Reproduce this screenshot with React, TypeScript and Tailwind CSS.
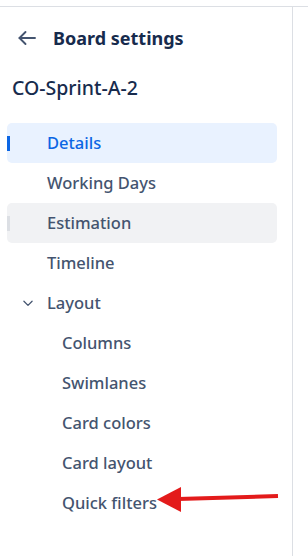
import React from "react";

const items = [
  { label: "Details", state: "active" },
  { label: "Working Days" },
  { label: "Estimation", state: "hover" },
  { label: "Timeline" },
];
const sub = ["Columns", "Swimlanes", "Card colors", "Card layout", "Quick filters"];

export default function App() {
  return (
    <div
      className="relative w-[308px] h-[556px] bg-white overflow-hidden"
      style={{ fontFamily: '"Noto Sans", "Open Sans", sans-serif' }}
    >
      <div className="mt-[6px] border-t border-[#dcdfe4] h-[550px] flex">
        <div className="w-[293px] border-r border-[#dcdfe4] h-full flex flex-col">
          <div className="flex items-center h-[50px] mt-[6px] pl-[15px]">
            <svg width="24" height="24" viewBox="0 0 24 24" fill="none" stroke="#44546f" strokeWidth="1.9" strokeLinecap="round" strokeLinejoin="round">
              <path d="M20 12H4.5" />
              <path d="M10.5 6l-6 6 6 6" />
            </svg>
            <span className="ml-[14px] text-[18px] font-bold text-[#172b4d]">Board settings</span>
          </div>
          <div className="pl-[12px] h-[50px] flex items-center text-[19.5px] font-medium text-[#172b4d]">CO-Sprint-A-2</div>
          <div className="mt-[10px] flex flex-col">
            {items.map((it) => (
              <div
                key={it.label}
                className={
                  "relative ml-[7px] w-[270px] h-[40px] rounded-[5px] flex items-center pl-[40px] text-[16.5px] font-medium " +
                  (it.state === "active"
                    ? "bg-[#e9f2ff] text-[#0c66e4]"
                    : it.state === "hover"
                    ? "bg-[#f1f2f4] text-[#44546f]"
                    : "text-[#44546f]")
                }
              >
                {it.state === "active" && (
                  <span className="absolute left-0 top-[13px] w-[3px] h-[15px] bg-[#0c66e4]" />
                )}
                {it.state === "hover" && (
                  <span className="absolute left-0 top-[13px] w-[3px] h-[15px] bg-[#dcdfe4]" />
                )}
                {it.label}
              </div>
            ))}
            <div className="ml-[7px] h-[40px] flex items-center pl-[14px] text-[16.5px] font-medium text-[#44546f]">
              <svg width="14" height="14" viewBox="0 0 24 24" fill="none" stroke="#44546f" strokeWidth="2.2" strokeLinecap="round" strokeLinejoin="round">
                <path d="M5 9l7 7 7-7" />
              </svg>
              <span className="ml-[12px]">Layout</span>
            </div>
            {sub.map((s) => (
              <div key={s} className="ml-[7px] h-[40px] flex items-center pl-[55px] text-[16.5px] font-medium text-[#44546f]">
                {s}
              </div>
            ))}
          </div>
        </div>
      </div>
      <svg className="absolute left-0 top-0" width="308" height="556" viewBox="0 0 308 556">
        <path d="M278 496 L178 499" stroke="#e31b1b" strokeWidth="4" strokeLinecap="butt" />
        <path d="M157 499.5 L181 487 L181 512 Z" fill="#e31b1b" />
      </svg>
    </div>
  );
}
